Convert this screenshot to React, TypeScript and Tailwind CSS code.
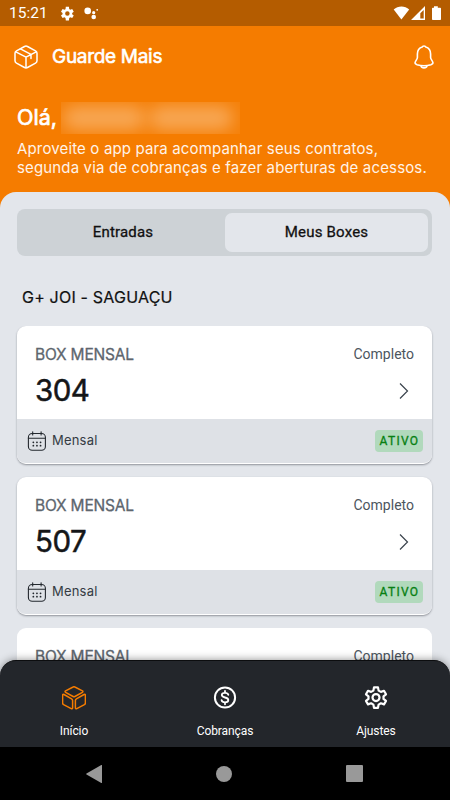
import type { ReactNode } from "react";

const BOXES = [
  { id: "304", kind: "BOX MENSAL", access: "Completo", period: "Mensal", status: "ATIVO" },
  { id: "507", kind: "BOX MENSAL", access: "Completo", period: "Mensal", status: "ATIVO" },
];

type Box = (typeof BOXES)[number];

function PackageIcon() {
  return (
    <svg className="w-6 h-6" viewBox="0 0 24 24" fill="none" stroke="white" strokeWidth="1.5" strokeLinejoin="round" strokeLinecap="round">
      <path d="M10.5 1.5Q12 .7 13.5 1.5L21.5 5.8Q23 6.7 23 8.2V15.8Q23 17.3 21.5 18.2L13.5 22.5Q12 23.3 10.5 22.5L2.5 18.2Q1 17.3 1 15.8V8.2Q1 6.7 2.5 5.8Z" />
      <path d="M1.8 6.8L12 12.2L22.2 6.8M12 12.2V22.5M6.4 3.9L17 9.4V13.6" />
    </svg>
  );
}

function BellIcon() {
  return (
    <svg className="w-5 h-6" viewBox="0 0 20 24" fill="none" stroke="white" strokeWidth="1.6" strokeLinejoin="round" strokeLinecap="round">
      <path d="M8.3 1.9C8.5 .6 11.5 .6 11.7 1.9C15 2.8 16.6 5.5 16.6 9V12.5C16.6 14.5 19 15.8 19 18.1C19 19 18 19.3 17 19.7C12.5 21 7.5 21 3 19.7C2 19.3 1 19 1 18.1C1 15.8 3.4 14.5 3.4 12.5V9C3.4 5.5 5 2.8 8.3 1.9Z" />
      <path d="M7 20.8C7.6 23.5 12.4 23.5 13 20.8" />
    </svg>
  );
}

function CalendarIcon() {
  return (
    <svg className="w-5 h-5" viewBox="0 0 20 20" fill="none" stroke="#23282e" strokeWidth="1.1" strokeLinecap="round">
      <rect x="1.4" y="2.5" width="17" height="16.8" rx="3.8" />
      <path d="M1.4 7.2H18.4M5.7 .7V4M14.1 .7V4" />
      <path d="M6.3 11.3H6.4M9.9 11.3H10M13.5 11.3H13.6M6.3 14.7H6.4M9.9 14.7H10M13.5 14.7H13.6" strokeWidth="1.7" />
    </svg>
  );
}

function CubesIcon() {
  return (
    <svg className="w-6 h-6" viewBox="0 0 24 24" fill="none" stroke="#f57c00" strokeWidth="1.5" strokeLinejoin="round">
      <path d="M11.1 1Q12 .5 12.9 1L20.4 4.9Q21.5 5.6 20.4 6.3L12.9 10.5Q12 11 11.1 10.5L3.6 6.3Q2.5 5.6 3.6 4.9Z" />
      <path d="M2 8.5L9.6 12.8Q10.6 13.4 10.6 14.5V21.7Q10.6 23.3 9.2 22.6L1.6 18.6Q.6 18 .6 17V9.3Q.6 7.8 2 8.5Z" />
      <path d="M22 8.5L14.4 12.8Q13.4 13.4 13.4 14.5V21.7Q13.4 23.3 14.8 22.6L22.4 18.6Q23.4 18 23.4 17V9.3Q23.4 7.8 22 8.5Z" />
    </svg>
  );
}

function DollarIcon() {
  return (
    <svg className="w-6 h-6" viewBox="0 0 24 24" fill="none" stroke="white" strokeWidth="2" strokeLinecap="round">
      <circle cx="12" cy="11.5" r="10.1" />
      <path d="M15.3 8.8C15 7.5 13.8 6.8 12 6.8C10 6.8 8.8 7.6 8.8 9.1C8.8 10.7 10.2 11.1 12 11.5C13.8 11.9 15.3 12.3 15.3 14C15.3 15.5 14 16.3 12 16.3C10.1 16.3 8.9 15.5 8.6 14.2M12 4.8V6.8M12 16.3V18.3" strokeWidth="1.8" />
    </svg>
  );
}

function GearIcon() {
  return (
    <svg className="w-6 h-6" viewBox="0 0 24 24" fill="none" stroke="white" strokeWidth="2.2" strokeLinejoin="round">
      <path d="M10 1.4H14L14.6 4.6L16.9 5.9L20 4.8L22 8.3L19.5 10.3V12.9L22 14.9L20 18.4L16.9 17.3L14.6 18.6L14 21.8H10L9.4 18.6L7.1 17.3L4 18.4L2 14.9L4.5 12.9V10.3L2 8.3L4 4.8L7.1 5.9L9.4 4.6Z" />
      <circle cx="12" cy="11.6" r="3.5" />
    </svg>
  );
}

function StatusBar() {
  return (
    <div className="h-[26px] shrink-0 bg-[#b45c00] text-white flex items-center">
      <span className="ml-[9px] w-[51px] pt-0.5 font-[Roboto,sans-serif] text-[15.5px] leading-none">15:21</span>
      <svg className="w-[15px] h-[15px]" viewBox="0 0 24 24" fill="white">
        <path fillRule="evenodd" d="M19.4 13a7 7 0 0 0 0-2l2.6-2-2.5-4.3-3 1.2-1.8-1L14.3 1h-5l-.5 4-1.7 1-3-1.2L1.6 9l2.5 2a7 7 0 0 0 0 2l-2.5 2 2.5 4.3 3-1.2 1.7 1 .5 4h5l.4-4 1.8-1 3 1.2L22 15ZM11.8 15.6a3.6 3.6 0 1 1 0-7.2 3.6 3.6 0 0 1 0 7.2Z" />
      </svg>
      <svg className="ml-[9px] w-[15px] h-[15px]" viewBox="0 0 15 15" fill="white">
        <circle cx="3.7" cy="4.9" r="3.3" />
        <circle cx="9.7" cy="6.7" r="1.6" />
        <circle cx="9.7" cy="11" r="2.3" />
        <circle cx="13.2" cy="3.8" r=".9" />
      </svg>
      <svg className="ml-auto mr-2 w-[49px] h-[15px]" viewBox="0 0 49 15" fill="white">
        <path d="M.7 3.6C5 -.5 12 -.5 16.2 3.6L8.4 13.4Z" />
        <path fillRule="evenodd" d="M32 0V14H18ZM27.3 7.3V12.6H30.7V4Z" />
        <path d="M41 .2H44.8V1.8H47.2Q48 1.8 48 2.6V13.2Q48 14 47.2 14H39.8Q39 14 39 13.2V2.6Q39 1.8 39.8 1.8H41Z" />
      </svg>
    </div>
  );
}

function BoxHeading({ kind, access }: { kind: string; access: string }) {
  return (
    <div className="flex justify-between items-start">
      <span className="text-[15.5px] leading-5 tracking-[-0.2px] text-[#5d666e] [-webkit-text-stroke:0.3px_#5d666e]">{kind}</span>
      <span className="font-[Roboto,sans-serif] text-[14px] leading-[18px] text-[#4c555e]">{access}</span>
    </div>
  );
}

function BoxCard({ box }: { box: Box }) {
  return (
    <article className="h-[138px] shrink-0 rounded-[9px] border-b border-white bg-white overflow-hidden shadow-[0_1px_2px_rgba(40,45,55,0.45)]">
      <div className="h-[93px] px-[18px] pt-[19px]">
        <BoxHeading kind={box.kind} access={box.access} />
        <div className="flex justify-between items-center h-[52px]">
          <span className="text-[29.5px] leading-none tracking-[-0.5px] text-[#141618] [-webkit-text-stroke:0.5px_#141618]">{box.id}</span>
          <svg className="w-2.5 h-[18px] mr-[5px]" viewBox="0 0 10 18" fill="none" stroke="#3a434c" strokeWidth="1.2">
            <path d="M1 1.5L8.5 9L1 16.5" />
          </svg>
        </div>
      </div>
      <div className="h-11 bg-[#dee1e6] flex items-center pl-2.5 pr-[9px]">
        <CalendarIcon />
        <span className="ml-[5px] text-[13px] tracking-[0.2px] text-[#343b43]">{box.period}</span>
        <span className="ml-auto w-12 h-[22px] rounded bg-[#b1d9bc] text-[#078013] font-[Roboto,sans-serif] text-[12px] tracking-[1.3px] pl-px flex items-center justify-center [-webkit-text-stroke:0.3px_#078013]">
          {box.status}
        </span>
      </div>
    </article>
  );
}

function NavItem({ icon, label }: { icon: ReactNode; label: string }) {
  return (
    <button className="w-[151px] flex flex-col items-center pt-[25px] text-white">
      {icon}
      <span className="mt-[13px] font-[Roboto,sans-serif] text-[12px] leading-4 tracking-[-0.1px]">{label}</span>
    </button>
  );
}

export default function App() {
  return (
    <div className="w-[450px] h-[800px] flex flex-col overflow-hidden bg-[#f57c00] font-[Inter,sans-serif]">
      <StatusBar />

      <header className="h-[166px] shrink-0 text-white">
        <div className="h-[62px] px-[14px] flex items-center">
          <PackageIcon />
          <h1 className="ml-[14px] text-[19px] tracking-[-0.3px] [-webkit-text-stroke:0.6px_white]">Guarde Mais</h1>
          <span className="ml-auto mr-0.5">
            <BellIcon />
          </span>
        </div>
        <div className="pl-[17px] pt-[14px]">
          <div className="flex h-8 items-center">
            <span className="w-11 text-[21.5px] leading-none [-webkit-text-stroke:0.7px_white]">Olá,</span>
            {/* redacted customer name */}
            <div className="w-[179px] h-8 bg-white/4 flex items-center gap-1 pl-0.5 overflow-hidden">
              <div className="w-[82px] h-6 rounded-full bg-white/30 blur-[8px]" />
              <div className="w-[84px] h-6 rounded-full bg-white/30 blur-[8px]" />
            </div>
          </div>
          <p className="mt-1.5 text-[15px] leading-[18.5px] tracking-[0.15px] text-[#fff3e8] whitespace-nowrap">
            Aproveite o app para acompanhar seus contratos,
            <br />
            segunda via de cobranças e fazer aberturas de acessos.
          </p>
        </div>
      </header>

      <main className="h-[555px] shrink-0 rounded-t-[16px] bg-[#e3e6eb] flex flex-col overflow-hidden">
        <div className="ml-[17px] mr-[18px] mt-[17px] h-[47px] shrink-0 p-1 flex rounded-lg bg-[#cdd2d6] font-[Roboto,sans-serif] text-[15px] tracking-[0.2px] text-[#111] [-webkit-text-stroke:0.3px_#111]">
          <button className="flex-1">Entradas</button>
          <button className="w-[203px] rounded-[7px] bg-[#e3e6eb]">Meus Boxes</button>
        </div>
        <h2 className="mt-[30px] ml-[22px] h-[22px] shrink-0 text-[16px] leading-[22px] tracking-[0.2px] text-[#111] [-webkit-text-stroke:0.2px_#111]">
          G+ JOI - SAGUAÇU
        </h2>
        <div className="mt-[17.5px] h-[334.5px] shrink-0 pl-[17px] pr-[18px] flex flex-col gap-[13px] overflow-hidden">
          {BOXES.map((box) => (
            <BoxCard key={box.id} box={box} />
          ))}
          <article className="h-[33px] shrink-0 rounded-t-[9px] bg-white px-[18px] pt-[19px] overflow-hidden">
            <BoxHeading kind="BOX MENSAL" access="Completo" />
          </article>
        </div>
        <nav className="relative h-[87px] shrink-0 rounded-t-[16px] bg-[#23262b] border-t border-[#0c0d0f] flex justify-center shadow-[0_0_8px_rgba(0,0,0,0.45)] *:shrink-0">
          <NavItem icon={<CubesIcon />} label="Início" />
          <NavItem icon={<DollarIcon />} label="Cobranças" />
          <NavItem icon={<GearIcon />} label="Ajustes" />
        </nav>
      </main>

      <div className="h-[53px] shrink-0 bg-black px-[86px] flex items-center justify-between">
        <svg className="w-4 h-[18px]" viewBox="0 0 16 18" fill="#999">
          <path d="M16 .5V17.5Q16 18.3 15.3 17.9L.5 9.4Q-.2 9 .5 8.6L15.3.1Q16-.3 16 .5Z" />
        </svg>
        <div className="w-4 h-4 rounded-full bg-[#999]" />
        <div className="w-[17px] h-[17px] mr-px rounded-[1px] bg-[#999]" />
      </div>
    </div>
  );
}
